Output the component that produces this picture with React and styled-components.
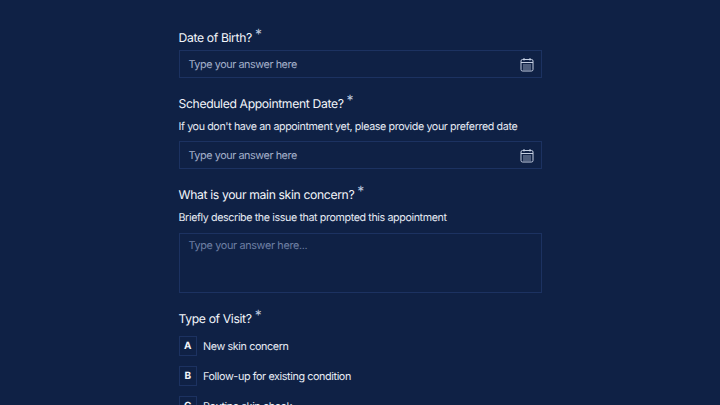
import React from "react";
import styled, { createGlobalStyle } from "styled-components";

const Global = createGlobalStyle`
  html, body { margin: 0; padding: 0; height: 405px; overflow: hidden; background: #0f2145; }
  * { box-sizing: border-box; }
`;
const Page = styled.div`
  width: 720px; height: 405px; overflow: hidden; background: #0f2145;
  font-family: Inter, "Liberation Sans", Arial, sans-serif; color: #f2f5fa;
  text-rendering: geometricPrecision;
  display: flex; justify-content: center;
`;
const Form = styled.form`
  width: 363px; padding-top: 28px; display: flex; flex-direction: column; flex-shrink: 0;
`;
const Field = styled.div`
  display: flex; flex-direction: column; margin-bottom: 16px;
`;
const Label = styled.div`
  font-size: 12.2px; line-height: 18px; height: 18px; padding-top: 1px; letter-spacing: -0.36px; color: #f2f5fa; margin-bottom: 4px; white-space: nowrap;
`;
const Star = styled.span`
  display: inline-block; margin-left: 3px; font-size: 14px; line-height: 10px; color: #b9c5dc; position: relative; top: -3px;
`;
const Hint = styled.div`
  font-size: 10.7px; line-height: 16px; letter-spacing: -0.38px; color: #e6ebf4; margin: 3px 0 6px; white-space: nowrap;
`;
const InputBox = styled.div`
  height: 28px; border: 1px solid #1c3261; display: flex; align-items: center; justify-content: space-between;
  padding: 0 7px 0 9px; font-size: 10.8px; letter-spacing: -0.42px; color: #a3b0ca;
`;
const Area = styled.div`
  height: 60px; margin-top: 1px; border: 1px solid #1c3261; padding: 4px 9px; font-size: 10.8px; line-height: 16px; letter-spacing: -0.32px; color: #6d7fa3;
`;
const Options = styled.div`
  display: flex; flex-direction: column; gap: 10px; margin-top: 5px;
`;
const Option = styled.div`
  display: flex; align-items: center; gap: 6px; height: 20px; font-size: 10.8px; letter-spacing: -0.4px; color: #e6ebf4;
`;
const Key = styled.div`
  width: 18.5px; height: 20px; border: 1px solid #1c3261; display: flex; align-items: center; justify-content: center;
  font-size: 10px; font-weight: 700; letter-spacing: 0; color: #f2f5fa;
`;
const Cal = () => (
  <svg width="14" height="15" viewBox="0 0 14 15" fill="none" stroke="#c5cfe2" strokeWidth="1">
    <rect x="1" y="2.5" width="12" height="11.5" rx="1.5" />
    <path d="M1 5.5h12M4 1v2.5M10 1v2.5" />
    <path d="M3 8h8M3 10h8M3 12h8" strokeOpacity="0.7" />
  </svg>
);
const Req = () => <Star>*</Star>;
export default function App() {
  return (
    <Page>
      <Global />
      <Form>
        <Field>
          <Label>Date of Birth?<Req /></Label>
          <InputBox>Type your answer here<Cal /></InputBox>
        </Field>
        <Field>
          <Label>Scheduled Appointment Date?<Req /></Label>
          <Hint>If you don't have an appointment yet, please provide your preferred date</Hint>
          <InputBox>Type your answer here<Cal /></InputBox>
        </Field>
        <Field>
          <Label>What is your main skin concern?<Req /></Label>
          <Hint>Briefly describe the issue that prompted this appointment</Hint>
          <Area>Type your answer here...</Area>
        </Field>
        <Field>
          <Label>Type of Visit?<Req /></Label>
          <Options>
            <Option><Key>A</Key>New skin concern</Option>
            <Option><Key>B</Key>Follow-up for existing condition</Option>
            <Option><Key>C</Key>Routine skin check</Option>
          </Options>
        </Field>
      </Form>
    </Page>
  );
}
